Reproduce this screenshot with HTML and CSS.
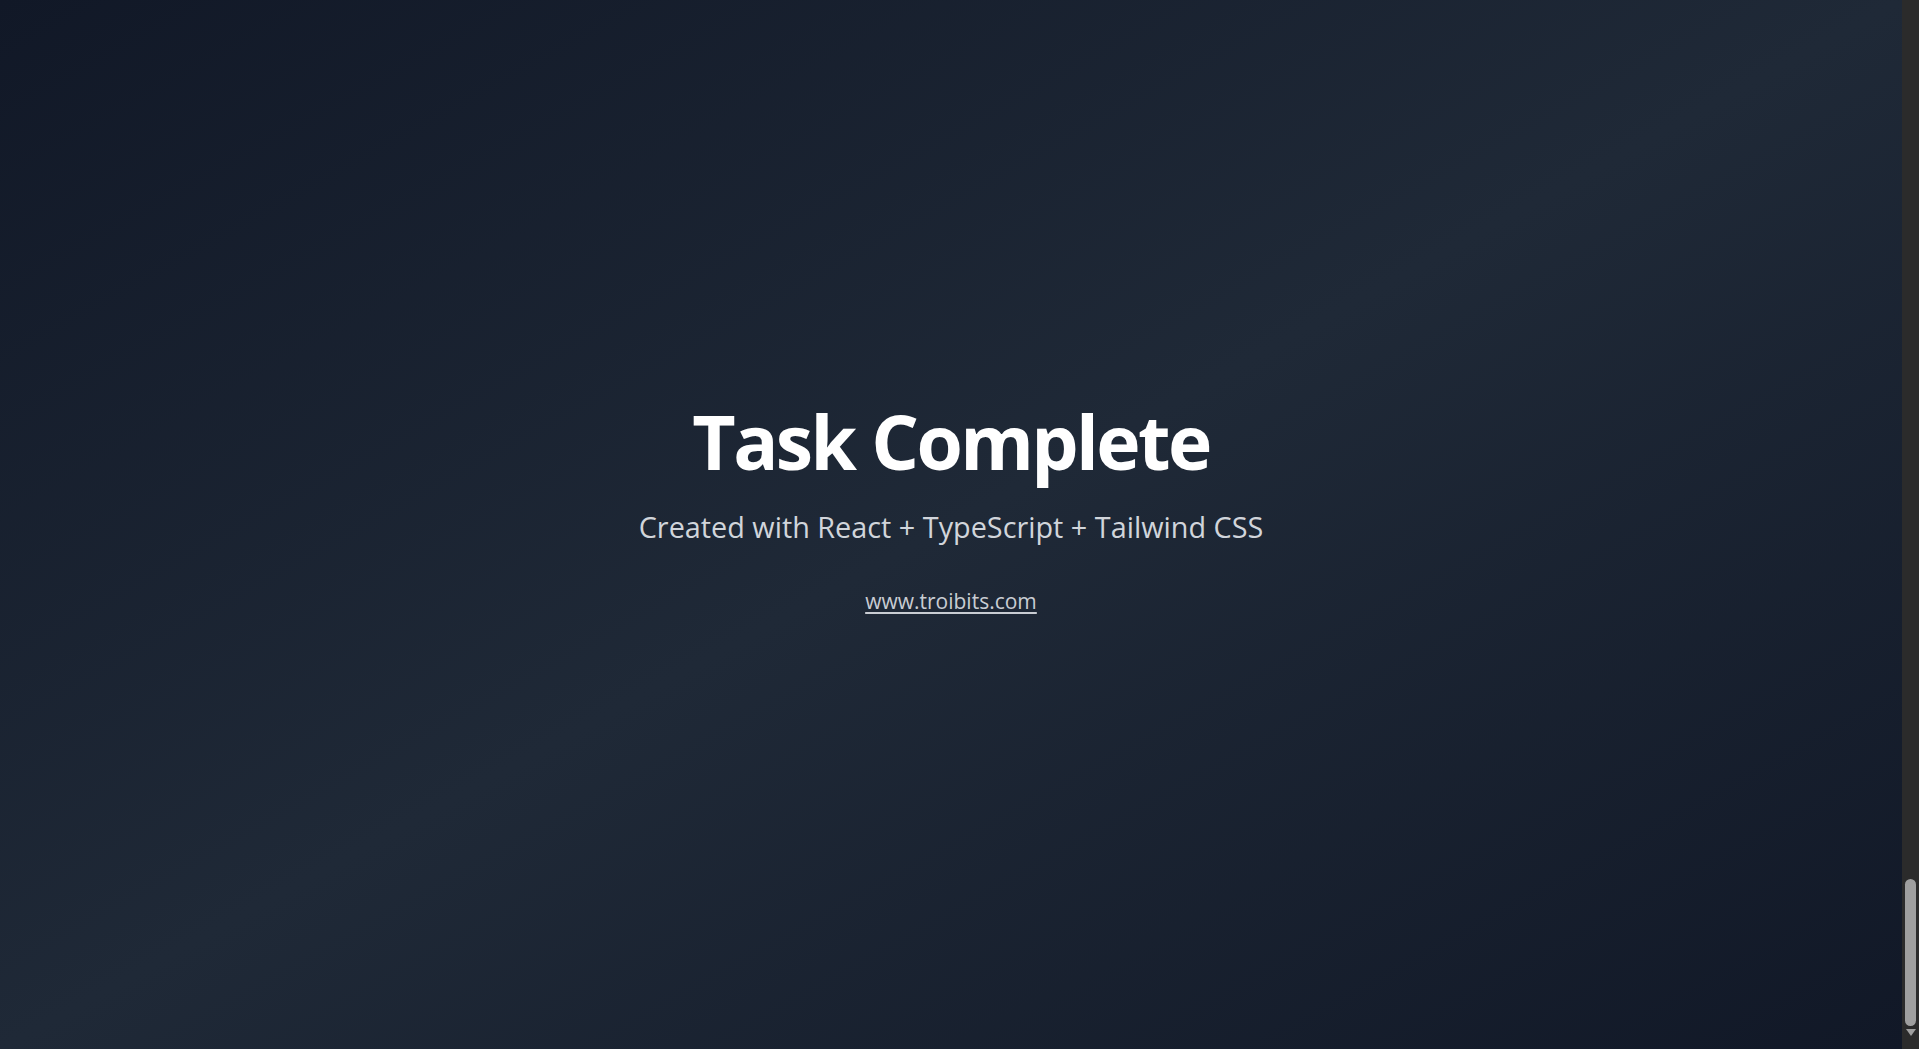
FILE: index.html
```html
<!DOCTYPE html>
<html lang="en">
<head>
<meta charset="utf-8">
<title>Task Complete</title>
<link rel="stylesheet" href="styles.css">
</head>
<body>
<div class="window">
  <main class="screen">
    <section class="hero">
      <h1 class="title">Task Complete</h1>
      <p class="subtitle">Created with React + TypeScript + Tailwind CSS</p>
      <a class="link" href="#">www.troibits.com</a>
    </section>
  </main>
  <div class="scrollbar">
    <div class="track">
      <div class="thumb"></div>
    </div>
    <div class="arrow"></div>
  </div>
</div>
</body>
</html>
```
FILE: styles.css
```css
html, body {
  margin: 0;
  padding: 0;
  height: 100%;
  overflow: hidden;
}
body {
  font-family: "Segoe UI", "Open Sans", "Noto Sans", sans-serif;
  background: #111827;
}
.window {
  display: flex;
  height: 100vh;
}
.screen {
  flex: 1;
  display: flex;
  align-items: center;
  justify-content: center;
  padding-bottom: 34px;
  background: linear-gradient(to bottom right, #111827 0%, #1f2937 50%, #111827 100%);
}
.hero {
  display: flex;
  flex-direction: column;
  align-items: center;
  text-align: center;
}
.title {
  margin: 0;
  color: #ffffff;
  font-size: 75px;
  font-weight: 700;
  line-height: 1.1;
  letter-spacing: -0.035em;
}
.subtitle {
  margin: 25px 0 0;
  color: #d1d5db;
  font-size: 28.8px;
  line-height: 1.4;
}
.link {
  margin-top: 40px;
  color: #c9cdd3;
  font-size: 21px;
  text-decoration: underline;
  text-underline-offset: 3px;
}
.scrollbar {
  width: 17px;
  background: #2b2b2b;
  display: flex;
  flex-direction: column;
  align-items: center;
  padding-top: 17px;
  box-sizing: border-box;
}
.track {
  flex: 1;
  width: 100%;
  display: flex;
  flex-direction: column;
  justify-content: flex-end;
  align-items: center;
}
.thumb {
  width: 11px;
  height: 147px;
  border-radius: 6px;
  background: #9f9f9f;
  margin-bottom: 1px;
}
.arrow {
  width: 0;
  height: 0;
  margin: 2px 0 13px;
  border-left: 5px solid transparent;
  border-right: 5px solid transparent;
  border-top: 7px solid #9f9f9f;
}
```
